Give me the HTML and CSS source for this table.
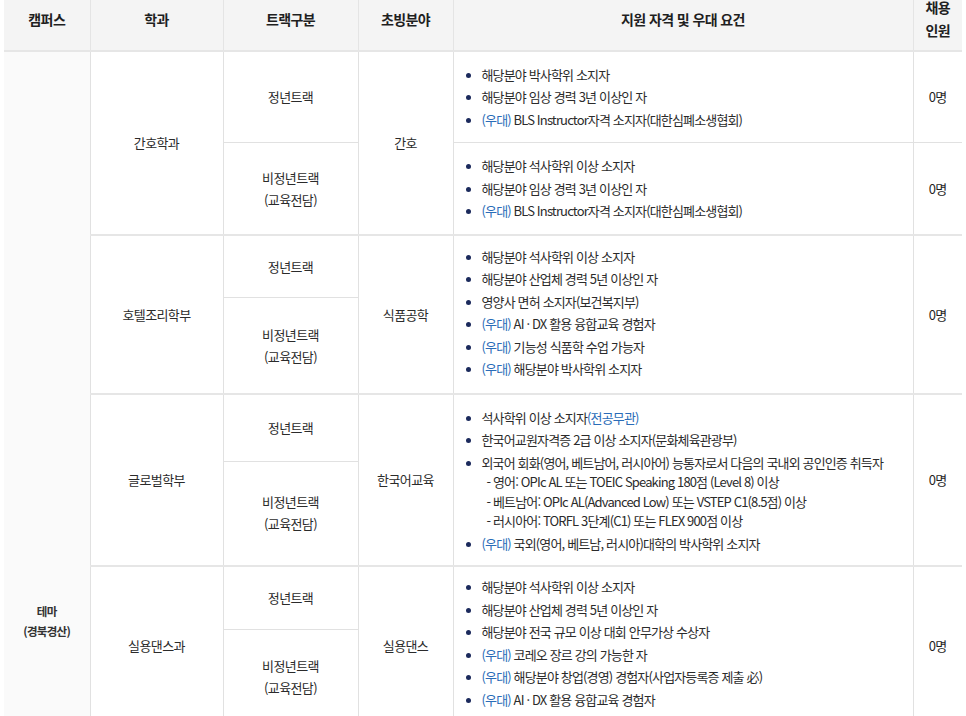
FILE: index.html
```html
<!DOCTYPE html>
<html lang="ko">
<head>
<meta charset="utf-8">
<title>초빙 분야</title>
<link rel="stylesheet" href="styles.css">
</head>
<body>
<div class="wrap">
<table class="recruit">
  <colgroup>
    <col class="c-campus"><col class="c-dept"><col class="c-track"><col class="c-field"><col class="c-req"><col class="c-num">
  </colgroup>
  <thead>
    <tr>
      <th class="first">캠퍼스</th>
      <th>학과</th>
      <th>트랙구분</th>
      <th>초빙분야</th>
      <th>지원 자격 및 우대 요건</th>
      <th class="last">채용<br>인원</th>
    </tr>
  </thead>
  <tbody>
    <tr>
      <td class="campus first" rowspan="8">테마<br>(경북경산)</td>
      <td rowspan="2">간호학과</td>
      <td class="h91">정년트랙</td>
      <td rowspan="2">간호</td>
      <td class="req">
        <ul>
          <li>해당분야 박사학위 소지자</li>
          <li>해당분야 임상 경력 3년 이상인 자</li>
          <li><span class="pref">(우대)</span> BLS Instructor자격 소지자(대한심폐소생협회)</li>
        </ul>
      </td>
      <td class="last num">0명</td>
    </tr>
    <tr>
      <td class="h92">비정년트랙<br>(교육전담)</td>
      <td class="req">
        <ul>
          <li>해당분야 석사학위 이상 소지자</li>
          <li>해당분야 임상 경력 3년 이상인 자</li>
          <li><span class="pref">(우대)</span> BLS Instructor자격 소지자(대한심폐소생협회)</li>
        </ul>
      </td>
      <td class="last num">0명</td>
    </tr>
    <tr class="group">
      <td rowspan="2">호텔조리학부</td>
      <td class="h62">정년트랙</td>
      <td rowspan="2">식품공학</td>
      <td class="req" rowspan="2">
        <ul>
          <li>해당분야 석사학위 이상 소지자</li>
          <li>해당분야 산업체 경력 5년 이상인 자</li>
          <li>영양사 면허 소지자(보건복지부)</li>
          <li><span class="pref">(우대)</span> AI · DX 활용 융합교육 경험자</li>
          <li><span class="pref">(우대)</span> 기능성 식품학 수업 가능자</li>
          <li><span class="pref">(우대)</span> 해당분야 박사학위 소지자</li>
        </ul>
      </td>
      <td class="last num" rowspan="2">0명</td>
    </tr>
    <tr>
      <td class="h95">비정년트랙<br>(교육전담)</td>
    </tr>
    <tr class="group">
      <td rowspan="2">글로벌학부</td>
      <td class="h68">정년트랙</td>
      <td rowspan="2">한국어교육</td>
      <td class="req global" rowspan="2">
        <ul>
          <li>석사학위 이상 소지자<span class="pref">(전공무관)</span></li>
          <li>한국어교원자격증 2급 이상 소지자(문화체육관광부)</li>
          <li>외국어 회화(영어, 베트남어, 러시아어) 능통자로서 다음의 국내외 공인인증 취득자
            <span class="sub">- 영어: OPIc AL 또는 TOEIC Speaking 180점 (Level 8) 이상</span>
            <span class="sub">- 베트남어: OPIc AL(Advanced Low) 또는 VSTEP C1(8.5점) 이상</span>
            <span class="sub">- 러시아어: TORFL 3단계(C1) 또는 FLEX 900점 이상</span>
          </li>
          <li><span class="pref">(우대)</span> 국외(영어, 베트남, 러시아)대학의 박사학위 소지자</li>
        </ul>
      </td>
      <td class="last num" rowspan="2">0명</td>
    </tr>
    <tr>
      <td class="h103">비정년트랙<br>(교육전담)</td>
    </tr>
    <tr class="group">
      <td rowspan="2">실용댄스과</td>
      <td class="h63">정년트랙</td>
      <td rowspan="2">실용댄스</td>
      <td class="req" rowspan="2">
        <ul>
          <li>해당분야 석사학위 이상 소지자</li>
          <li>해당분야 산업체 경력 5년 이상인 자</li>
          <li>해당분야 전국 규모 이상 대회 안무가상 수상자</li>
          <li><span class="pref">(우대)</span> 코레오 장르 강의 가능한 자</li>
          <li><span class="pref">(우대)</span> 해당분야 창업(경영) 경험자(사업자등록증 제출 必)</li>
          <li><span class="pref">(우대)</span> AI · DX 활용 융합교육 경험자</li>
        </ul>
      </td>
      <td class="last num" rowspan="2">0명</td>
    </tr>
    <tr>
      <td class="h96">비정년트랙<br>(교육전담)</td>
    </tr>
  </tbody>
</table>
</div>
</body>
</html>
```

FILE: styles.css
```css
html, body {
  margin: 0;
  padding: 0;
  background: #ffffff;
}

body {
  font-family: "Noto Sans CJK KR", "Noto Sans", sans-serif;
  color: #2b2b2b;
}

.wrap {
  padding: 0 4px;
}

.recruit {
  border-collapse: collapse;
  table-layout: fixed;
  width: 958px;
  margin-top: -12px;
  font-size: 13px;
  letter-spacing: -0.6px;
}

.c-campus { width: 86px; }
.c-dept { width: 133px; }
.c-track { width: 135px; }
.c-field { width: 95px; }
.c-req { width: 460px; }
.c-num { width: 49px; }

.recruit th {
  background: #f4f4f4;
  color: #1f1f1f;
  font-size: 14px;
  font-weight: 700;
  line-height: 23px;
  height: 62px;
  padding: 0;
  border-left: 1px solid #e4e4e4;
  border-right: 1px solid #e4e4e4;
  border-bottom: 2px solid #e6e6e6;
  text-align: center;
  vertical-align: middle;
}

.recruit td {
  border: 1px solid #e1e1e1;
  padding: 0;
  text-align: center;
  vertical-align: middle;
  line-height: 22px;
  color: #2b2b2b;
}

.recruit tr.group > td {
  border-top: 2px solid #e6e6e6;
}

.recruit .first { border-left: none; }
.recruit .last { border-right: none; }

.recruit td.num {
  color: #1f1f1f;
}

.recruit td.campus {
  background: #fafafa;
  vertical-align: top;
  padding-top: 549px;
  font-size: 11.5px;
  font-weight: 700;
  line-height: 20px;
  color: #333333;
  letter-spacing: -0.7px;
}

.h91 { height: 90px; }
.h92 { height: 91px; }
.h62 { height: 61px; }
.h95 { height: 95px; }
.h63 { height: 62px; }
.h96 { height: 95px; }
.h68 { height: 66px; }
.h103 { height: 102px; }

.recruit td.req {
  text-align: left;
  vertical-align: middle;
  padding: 10px 8px 10px 0;
  letter-spacing: -0.85px;
}

.recruit tr.group > td.req {
  vertical-align: top;
  padding-top: 9px;
}

.recruit tr.group > td.req.global {
  padding-top: 11px;
}

.req ul {
  margin: 0;
  padding: 0 0 0 28px;
  list-style: disc;
}

.req li {
  line-height: 19.5px;
  padding: 1.5px 0;
}

.req li::marker {
  color: #1b2a5c;
  font-size: 12px;
}

.req .sub {
  display: block;
  padding-left: 5px;
  line-height: 19.5px;
}

.pref {
  color: #2a6cb8;
}
```
